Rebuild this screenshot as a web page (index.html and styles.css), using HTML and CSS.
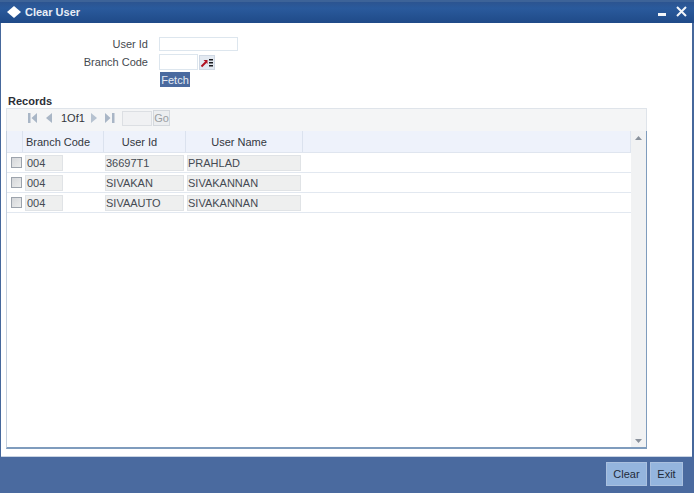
FILE: index.html
```html
<!DOCTYPE html>
<html lang="en">
<head>
<meta charset="utf-8">
<title>Clear User</title>
<link rel="stylesheet" href="styles.css">
</head>
<body>
<div class="window">
  <header class="titlebar">
    <div class="title-left">
      <svg class="logo" width="16" height="12" viewBox="0 0 16 12"><path d="M8 0l7 6-7 6-7-6z" fill="#fff"/></svg>
      <span>Clear User</span>
    </div>
    <div class="title-right">
      <svg width="9" height="4" viewBox="0 0 9 4"><rect y="0" width="8" height="3" fill="#f2f5fa"/></svg>
      <svg width="11" height="11" viewBox="0 0 11 11"><path d="M1 1l9 9M10 1l-9 9" stroke="#f2f5fa" stroke-width="2" fill="none"/></svg>
    </div>
  </header>
  <main class="content">
    <section class="form">
      <div class="form-row first">
        <label class="lbl">User Id</label>
        <div class="input wide"></div>
      </div>
      <div class="form-row second">
        <label class="lbl">Branch Code</label>
        <div class="input narrow"></div>
        <div class="lookup">
          <svg width="14" height="13" viewBox="0 0 14 13">
            <path d="M1.500 10.500L6 6" stroke="#b01020" stroke-width="2" fill="none"/>
            <path d="M3.500 4H7.500V8z" fill="#b01020"/>
            <path d="M9 3h4v1.500H9zM9 6h4v1.500H9zM9 9h4v1.500H9z" fill="#1c1c20"/>
          </svg>
        </div>
      </div>
      <div class="fetch-row"><button class="fetch">Fetch</button></div>
    </section>
    <h2 class="records">Records</h2>
    <section class="grid">
      <div class="toolbar">
        <svg class="nav first-nav" width="10" height="10" viewBox="0 0 10 10"><path d="M0 0h2.500v10H0zM9 0v10L3.500 5z" fill="#a9b6c6"/></svg>
        <svg class="nav prev" width="6" height="10" viewBox="0 0 6 10"><path d="M6 0v10L0 5z" fill="#a9b6c6"/></svg>
        <span class="pages">1Of1</span>
        <svg class="nav next" width="6" height="10" viewBox="0 0 6 10"><path d="M0 0v10l6-5z" fill="#b6c2d0"/></svg>
        <svg class="nav last" width="10" height="10" viewBox="0 0 10 10"><path d="M0 0v10l5.500-5zM7 0h2.500v10H7z" fill="#a9b6c6"/></svg>
        <div class="page-input"></div>
        <div class="go">Go</div>
      </div>
      <div class="table-wrap">
        <div class="table">
          <div class="thead">
            <div class="th c0"></div>
            <div class="th c1">Branch Code</div>
            <div class="th c2">User Id</div>
            <div class="th c3">User Name</div>
          </div>
          <div class="tr">
            <div class="td c0"><span class="check"></span></div>
            <div class="td c1"><span class="cell b">004</span></div>
            <div class="td c2"><span class="cell u">36697T1</span></div>
            <div class="td c3"><span class="cell n">PRAHLAD</span></div>
          </div>
          <div class="tr">
            <div class="td c0"><span class="check"></span></div>
            <div class="td c1"><span class="cell b">004</span></div>
            <div class="td c2"><span class="cell u">SIVAKAN</span></div>
            <div class="td c3"><span class="cell n">SIVAKANNAN</span></div>
          </div>
          <div class="tr">
            <div class="td c0"><span class="check"></span></div>
            <div class="td c1"><span class="cell b">004</span></div>
            <div class="td c2"><span class="cell u">SIVAAUTO</span></div>
            <div class="td c3"><span class="cell n">SIVAKANNAN</span></div>
          </div>
        </div>
        <div class="scrollbar">
          <svg width="7" height="4" viewBox="0 0 7 4"><path d="M3.500 0L7 4H0z" fill="#8a929c"/></svg>
          <svg width="7" height="4" viewBox="0 0 7 4"><path d="M0 0h7L3.500 4z" fill="#8a929c"/></svg>
        </div>
      </div>
    </section>
  </main>
  <footer class="footer">
    <button class="action clear">Clear</button>
    <button class="action exit">Exit</button>
  </footer>
</div>
</body>
</html>
```

FILE: styles.css
```css
* { box-sizing: border-box; }
html, body { margin: 0; height: 100%; }
body { font-family: "Liberation Sans", Arial, sans-serif; font-size: 11px; color: #3a3f48; background: #fff; }
.window { width: 694px; height: 493px; display: flex; flex-direction: column; border-right: 2px solid #46689c; border-left: 1px solid #46689c; }
.titlebar { height: 23px; flex: none; margin: 0 -2px 0 -1px; padding: 0 7px 0 6px; display: flex; align-items: center; justify-content: space-between; background: linear-gradient(#2c5490 0, #2a5a9c 30%, #1f4a88 100%); border-top: 2px solid #3d6398; color: #e9eef6; font-weight: bold; font-size: 11px; }
.title-left { display: flex; align-items: center; gap: 3px; padding-bottom: 2px; }
.title-right { display: flex; align-items: center; gap: 9px; padding-bottom: 2px; }
.title-right svg:first-child { margin-top: 7px; }
.content { flex: 1; padding: 0 0 0 5px; background: #fff; min-height: 0; display: flex; flex-direction: column; border-bottom: 1px solid #c9d4e4; }
.form { height: 67px; flex: none; padding-top: 14px; }
.form-row { display: flex; align-items: center; }
.form-row.first { height: 14px; }
.form-row.second { height: 16px; margin-top: 3px; }
.lbl { width: 142px; text-align: right; margin-right: 11px; font-size: 11px; color: #45494f; }
.input { border: 1px solid #dde6ee; background: #fff; }
.input.wide { width: 79px; height: 14px; }
.input.narrow { width: 39px; height: 16px; }
.lookup { width: 16px; height: 15px; margin-left: 1px; background: #e3e9f1; border: 1px solid #cfd8e4; display: flex; align-items: center; justify-content: center; }
.fetch-row { padding: 2px 0 0 154px; }
.fetch { display: block; width: 30px; height: 15px; padding: 0; border: 0; background: #4a6a9f; color: #e6ebf4; font: 11px "Liberation Sans", Arial, sans-serif; }
.records { margin: 0; padding: 5px 0 0 2px; font-size: 11px; line-height: 12px; font-weight: bold; color: #2c2f36; flex: none; height: 18px; }
.grid { width: 641px; height: 341px; flex: none; display: flex; flex-direction: column; }
.toolbar { height: 23px; flex: none; display: flex; align-items: center; background: #f4f5f6; border: 1px solid #dfe4ea; border-bottom: 0; padding: 0 0 4px 21px; }
.nav { flex: none; }
.prev { margin-left: 8px; }
.pages { margin-left: 9px; width: 25px; font-size: 11px; color: #33363c; }
.next { margin-left: 5px; }
.last { margin-left: 8px; }
.page-input { width: 30px; height: 15px; margin-left: 7px; background: #f0f1f3; border: 1px solid #dcdfe3; }
.go { width: 17px; height: 16px; margin-left: 1px; border: 1px solid #d4d8dd; background: #eceef0; color: #9a9ea4; font-size: 11px; line-height: 14px; text-align: center; }
.table-wrap { flex: 1; display: flex; min-height: 0; border-left: 1px solid #c5d0de; border-bottom: 2px solid #7f9cbd; border-right: 1px solid #7f9cbd; }
.table { flex: 1; min-width: 0; background: #fff; }
.thead { height: 22px; display: flex; background: #eef2fb; border-bottom: 1px solid #dfe5ef; border-right: 1px solid #dfe5ef; }
.th { height: 100%; text-align: center; line-height: 22px; font-size: 11px; color: #33373e; border-right: 1px solid #dbe2ee; padding-right: 10px; }
.c0 { width: 16px; flex: none; }
.c1 { width: 81px; flex: none; }
.c2 { width: 82px; flex: none; }
.c3 { width: 117px; flex: none; }
.tr { height: 20px; display: flex; align-items: center; border-bottom: 1px solid #e2e8f0; }
.td { height: 100%; display: flex; align-items: center; }
.td.c0 { padding-left: 4px; }
.check { display: block; width: 11px; height: 11px; background: linear-gradient(135deg, #d5d7da, #eceded); border: 1px solid #9ca3ac; }
.cell { display: block; height: 16px; line-height: 14px; font-size: 11px; color: #454a52; background: #eeefef; border: 1px solid #e0e3e6; }
.b { width: 38px; margin-left: 2px; padding-left: 1px; }
.u { width: 79px; margin-left: 1px; }
.n { width: 114px; margin-left: 1px; }
.scrollbar { width: 15px; flex: none; background: #f1f2f3; display: flex; flex-direction: column; justify-content: space-between; align-items: center; padding: 5px 0 4px; }
.footer { height: 36px; flex: none; margin: 0 -2px 0 -1px; padding: 5px 11px 0 0; background: #4a6a9f; display: flex; justify-content: flex-end; align-items: flex-start; gap: 3px; }
.action { height: 24px; padding: 0; border: 1px solid #a9c0df; background: #94b5de; color: #1f2a3a; font: 11px "Liberation Sans", Arial, sans-serif; }
.clear { width: 41px; }
.exit { width: 33px; }
```
